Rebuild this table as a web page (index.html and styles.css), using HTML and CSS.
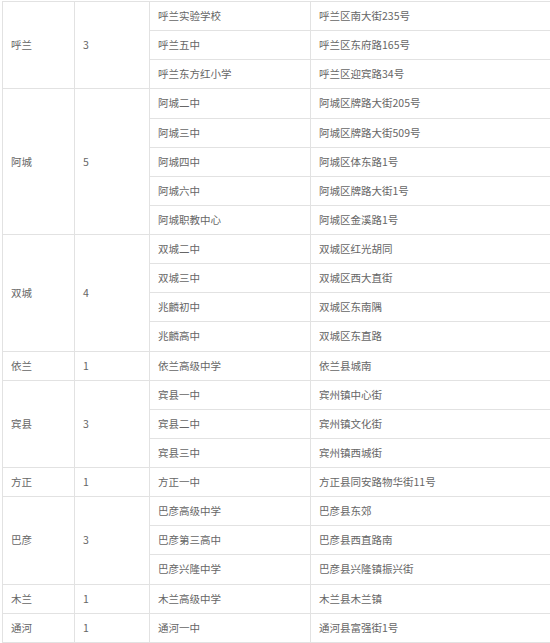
FILE: index.html
```html
<!DOCTYPE html>
<html lang="zh">
<head>
<meta charset="utf-8">
<link rel="stylesheet" href="styles.css">
</head>
<body>
<table class="schools">
  <colgroup>
    <col class="c1"><col class="c2"><col class="c3"><col class="c4">
  </colgroup>
  <tbody>
    <tr><td rowspan="3">呼兰</td><td rowspan="3">3</td><td>呼兰实验学校</td><td>呼兰区南大街235号</td></tr>
    <tr><td>呼兰五中</td><td>呼兰区东府路165号</td></tr>
    <tr><td>呼兰东方红小学</td><td>呼兰区迎宾路34号</td></tr>
    <tr><td rowspan="5">阿城</td><td rowspan="5">5</td><td>阿城二中</td><td>阿城区牌路大街205号</td></tr>
    <tr><td>阿城三中</td><td>阿城区牌路大街509号</td></tr>
    <tr><td>阿城四中</td><td>阿城区体东路1号</td></tr>
    <tr><td>阿城六中</td><td>阿城区牌路大街1号</td></tr>
    <tr><td>阿城职教中心</td><td>阿城区金溪路1号</td></tr>
    <tr><td rowspan="4">双城</td><td rowspan="4">4</td><td>双城二中</td><td>双城区红光胡同</td></tr>
    <tr><td>双城三中</td><td>双城区西大直街</td></tr>
    <tr><td>兆麟初中</td><td>双城区东南隅</td></tr>
    <tr><td>兆麟高中</td><td>双城区东直路</td></tr>
    <tr><td>依兰</td><td>1</td><td>依兰高级中学</td><td>依兰县城南</td></tr>
    <tr><td rowspan="3">宾县</td><td rowspan="3">3</td><td>宾县一中</td><td>宾州镇中心街</td></tr>
    <tr><td>宾县二中</td><td>宾州镇文化街</td></tr>
    <tr><td>宾县三中</td><td>宾州镇西城街</td></tr>
    <tr><td>方正</td><td>1</td><td>方正一中</td><td>方正县同安路物华街11号</td></tr>
    <tr><td rowspan="3">巴彦</td><td rowspan="3">3</td><td>巴彦高级中学</td><td>巴彦县东郊</td></tr>
    <tr><td>巴彦第三高中</td><td>巴彦县西直路南</td></tr>
    <tr><td>巴彦兴隆中学</td><td>巴彦县兴隆镇振兴街</td></tr>
    <tr><td>木兰</td><td>1</td><td>木兰高级中学</td><td>木兰县木兰镇</td></tr>
    <tr><td>通河</td><td>1</td><td>通河一中</td><td>通河县富强街1号</td></tr>
  </tbody>
</table>
</body>
</html>
```

FILE: styles.css
```css
html, body {
  margin: 0;
  padding: 0;
  background: #ffffff;
}
body {
  padding: 1px 0 0 2px;
  overflow: hidden;
}
.schools {
  border-collapse: collapse;
  table-layout: fixed;
  width: 549px;
  font-family: "Noto Sans CJK SC", "Liberation Sans", sans-serif;
  font-size: 10.5px;
  color: #666666;
}
.c1 { width: 72px; }
.c2 { width: 75px; }
.c3 { width: 161px; }
.c4 { width: 241px; }
.schools tr {
  height: 29.14px;
}
.schools td {
  border: 1px solid #e2e2e2;
  padding: 0 8px;
  vertical-align: middle;
  white-space: nowrap;
  line-height: 14px;
}
```
